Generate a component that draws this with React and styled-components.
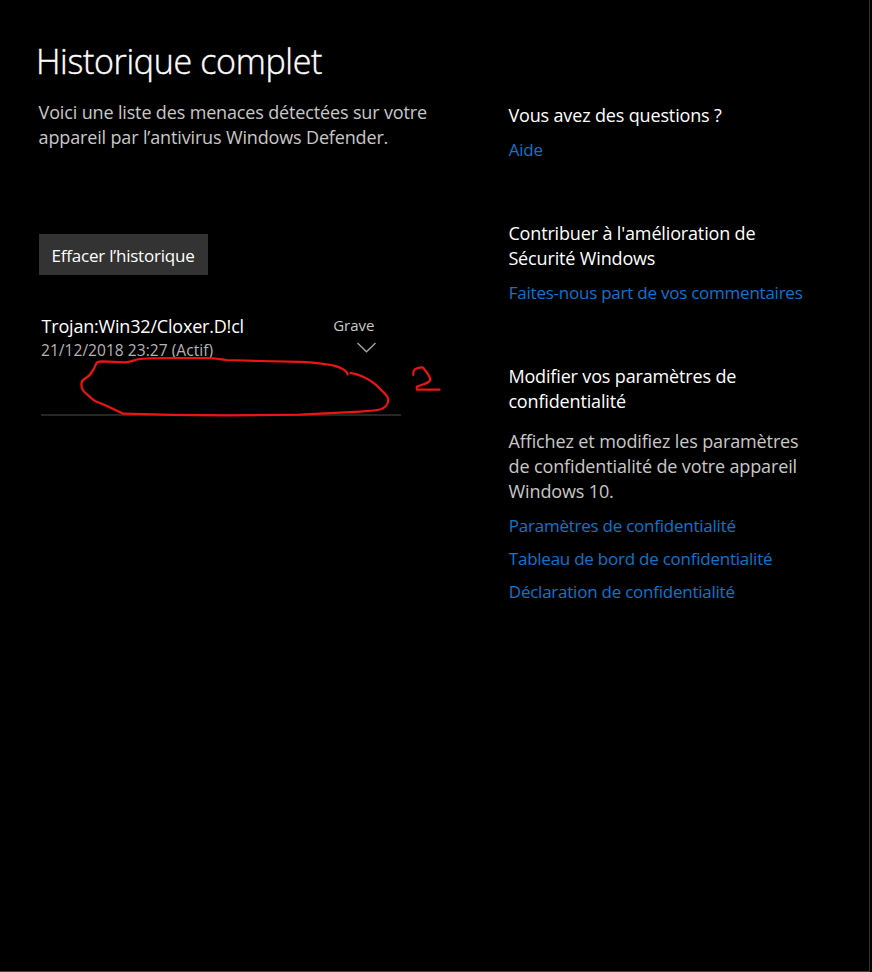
import React from "react";
import styled, { createGlobalStyle } from "styled-components";

const threats = [
  {
    name: "Trojan:Win32/Cloxer.D!cl",
    date: "21/12/2018 23:27 (Actif)",
    level: "Grave",
  },
];

const privacyLinks = [
  "Paramètres de confidentialité",
  "Tableau de bord de confidentialité",
  "Déclaration de confidentialité",
];

function Threat({ name, date, level }) {
  return (
    <ThreatRow>
      <div>
        <ThreatName>{name}</ThreatName>
        <ThreatDate>{date}</ThreatDate>
      </div>
      <Severity>
        <Level>{level}</Level>
        <Chevron viewBox="0 0 20 11">
          <path d="M1.5 1 L10.5 9.8 L19.5 1" />
        </Chevron>
      </Severity>
      <Markup viewBox="0 0 380 70">
        <path d="M286.7 18.5 C286 15 284 14 280.7 12.5 C276 10 272 9 265.7 8.3 C257 7 248 6 239 5.8 L199 5 L165.7 4 C158 3.2 154 2.2 145.7 2 L112.3 2 C101 2 90 2 79 3 C73 3.8 70 6.3 64 6.3 L42 5.3 C36 5.5 36 6 34.5 9 C33 14 31 15 29.5 18 C26 23 21 22 20.5 27 C20 32 21 34 24 36.5 C28 40 31 43 34 45 L46 50 L62.3 57.7 L112 58.8 L165.7 59.4 L239 58.7 L299 55.6 C309 55 316 54.5 320.7 53 C325 51 327 48 327.3 44 C327 39 322 36 319.7 33.5 C314 27 307 23 301 20.3 C297 18.5 293 17.5 289.5 16.8" />
        <path d="M352.3 19 C352 15 353 13 356 12.2 C359 11.3 361 10.5 362.5 12 C365 16 369 19 369.3 24 C368 27.5 361 28.5 355.7 30.7 L356 33.7 L378.5 33.7" />
      </Markup>
    </ThreatRow>
  );
}

function App() {
  return (
    <>
      <GlobalStyle />
      <Page>
        <Main>
          <Title>Historique complet</Title>
          <Text>
            Voici une liste des menaces détectées sur votre
            <br />
            appareil par l’antivirus Windows Defender.
          </Text>
          <ClearButton type="button">Effacer l’historique</ClearButton>
          {threats.map((threat) => (
            <Threat key={threat.name} {...threat} />
          ))}
        </Main>
        <Aside>
          <Section>
            <Heading>Vous avez des questions ?</Heading>
            <Link href="#">Aide</Link>
          </Section>
          <Section>
            <Heading>
              Contribuer à l'amélioration de
              <br />
              Sécurité Windows
            </Heading>
            <Link href="#">Faites-nous part de vos commentaires</Link>
          </Section>
          <Section>
            <Heading>
              Modifier vos paramètres de
              <br />
              confidentialité
            </Heading>
            <Details>
              Affichez et modifiez les paramètres
              <br />
              de confidentialité de votre appareil
              <br />
              Windows 10.
            </Details>
            {privacyLinks.map((label) => (
              <Link key={label} href="#">
                {label}
              </Link>
            ))}
          </Section>
        </Aside>
      </Page>
    </>
  );
}

const GlobalStyle = createGlobalStyle`
  * {
    box-sizing: border-box;
  }

  body {
    margin: 0;
    background: #000;
    font-family: "Open Sans", "Noto Sans", sans-serif;
  }
`;

const Page = styled.div`
  display: flex;
  width: 870px;
  height: 972px;
  padding: 38px 0 0 38px;
  border-right: 1px solid #333;
  border-bottom: 1px solid #444;
  background: #000;
`;

const Main = styled.main`
  width: 470px;
`;

const Title = styled.h1`
  margin: 0 0 16px -2px;
  color: #fff;
  font-size: 34px;
  font-weight: 300;
  line-height: 46px;
  letter-spacing: -0.34px;
  -webkit-text-stroke: 0.4px #fff;
`;

const Text = styled.p`
  margin: 0;
  padding-left: 0.6px;
  color: #c8c8c8;
  font-size: 18px;
  line-height: 25px;
  letter-spacing: -0.15px;
  white-space: nowrap;
`;

const ClearButton = styled.button`
  display: block;
  width: 169px;
  height: 41px;
  margin: 84px 0 39px 1px;
  padding: 2px 0 0 12.6px;
  border: 0;
  background: #333;
  color: #fff;
  font: inherit;
  font-size: 17px;
  letter-spacing: -0.22px;
  text-align: left;
`;

const ThreatRow = styled.div`
  position: relative;
  display: flex;
  justify-content: space-between;
  width: 360px;
  height: 102px;
  margin-left: 3px;
  padding-right: 25px;
  border-bottom: 2px solid #262626;
`;

const ThreatName = styled.div`
  padding-left: 0.6px;
  color: #fff;
  font-size: 18px;
  line-height: 25px;
  letter-spacing: -0.2px;
`;

const ThreatDate = styled.div`
  color: #b4b4b4;
  font-size: 15.5px;
  line-height: 22px;
  letter-spacing: 0.05px;
`;

const Severity = styled.div`
  display: flex;
  flex-direction: column;
  align-items: flex-end;
  width: 60px;
`;

const Level = styled.span`
  padding-right: 1.5px;
  color: #c8c8c8;
  font-size: 15px;
  line-height: 22px;
`;

const Chevron = styled.svg`
  width: 20px;
  height: 11px;
  margin-top: 6px;
  overflow: visible;
  fill: none;
  stroke: #a8a8a8;
  stroke-width: 1.3;
`;

/* hand-drawn red pen marks lying over the row */
const Markup = styled.svg`
  position: absolute;
  top: 42px;
  left: 20px;
  width: 380px;
  height: 70px;
  fill: none;
  stroke: #ee1414;
  stroke-width: 2.2;
  stroke-linecap: round;
  stroke-linejoin: round;
`;

const Aside = styled.aside`
  padding-top: 65px;
`;

const Section = styled.section`
  margin-bottom: 59px;
`;

const Heading = styled.h2`
  margin: 0 0 9px;
  padding-left: 0.4px;
  color: #fff;
  font-size: 18px;
  font-weight: 400;
  line-height: 25px;
  letter-spacing: -0.15px;
`;

const Details = styled(Text)`
  margin: 15px 0 9px;
  letter-spacing: -0.13px;
`;

const Link = styled.a`
  display: block;
  margin-bottom: 8px;
  padding-left: 0.8px;
  color: #0f74cf;
  font-size: 17px;
  line-height: 25px;
  letter-spacing: -0.24px;
  text-decoration: none;
`;

export default App;
